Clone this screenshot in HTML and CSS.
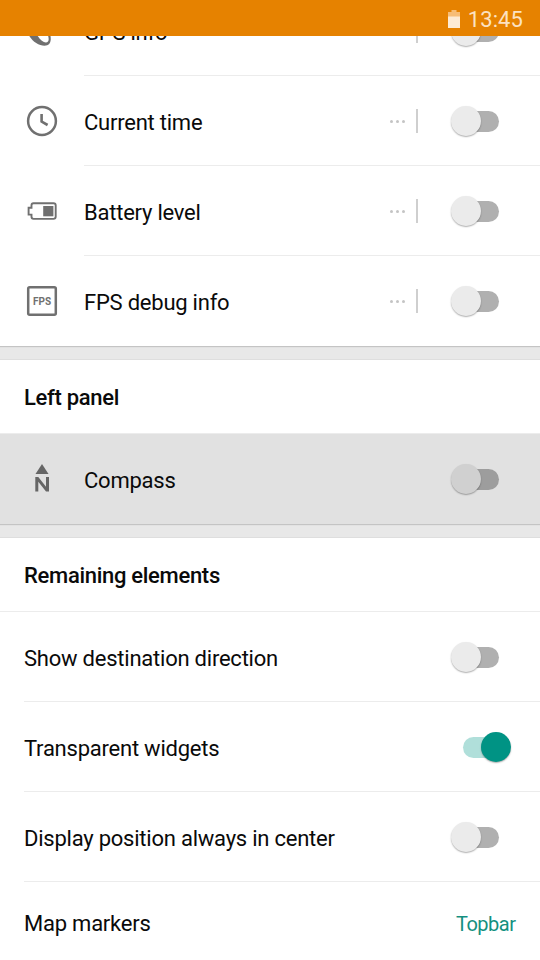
FILE: index.html
```html
<!DOCTYPE html>
<html lang="en">
<head>
<meta charset="utf-8">
<title>Configure screen</title>
<link rel="stylesheet" href="styles.css">
</head>
<body>
<div class="screen">
  <header class="status">
    <svg class="status-battery" width="12" height="18" viewBox="0 0 12 18"><path d="M3.500 0h5v2H12v5H0V2h3.500z" fill="#f7bd77"/><path d="M0 6.500h12V18H0z" fill="#fdebd5"/></svg>
    <span class="clock">13:45</span>
  </header>
  <main class="content">
    <section class="card card-first">
      <div class="row">
        <svg class="icon" width="32" height="32" viewBox="0 0 32 32"><path d="M1.500 17C4 25 12 30.800 18.500 30.800C23.500 30.800 25.800 27 24.300 20C22 12 14 6 8 5z" fill="#707070"/><path d="M8 12C10 21 16 27.500 19.800 27.500C23 27.500 23.500 24 21.500 19C19 13 13 9 8 12z" fill="#fff"/></svg>
        <span class="label">GPS info</span><span class="dots"><i></i><i></i><i></i></span><span class="bar"></span><span class="toggle"></span>
      </div>
      <div class="row">
        <svg class="icon" width="32" height="32" viewBox="0 0 32 32"><circle cx="16" cy="16" r="13.900" fill="none" stroke="#707070" stroke-width="2.500"/><path d="M15.600 9v7.600l6 3.400" fill="none" stroke="#707070" stroke-width="2.600"/></svg>
        <span class="label">Current time</span><span class="dots"><i></i><i></i><i></i></span><span class="bar"></span><span class="toggle"></span>
      </div>
      <div class="row">
        <svg class="icon" width="32" height="32" viewBox="0 0 32 32"><path d="M7.500 8.200H27.500Q29.700 8.200 29.700 10.200V21.800Q29.700 23.900 27.500 23.900H7.500Q5.500 23.900 5.500 21.800V19.600H2.600V12.800H5.500V10.200Q5.500 8.200 7.500 8.200Z" fill="none" stroke="#707070" stroke-width="1.900"/><path d="M17.200 11h10.200v10.300H17.200z" fill="#707070"/></svg>
        <span class="label">Battery level</span><span class="dots"><i></i><i></i><i></i></span><span class="bar"></span><span class="toggle"></span>
      </div>
      <div class="row">
        <svg class="icon" width="32" height="32" viewBox="0 0 32 32"><rect x="2.200" y="2.200" width="27.600" height="27.600" rx="1.500" fill="none" stroke="#707070" stroke-width="2.500"/><text class="fps" x="16" y="20" text-anchor="middle">FPS</text></svg>
        <span class="label">FPS debug info</span><span class="dots"><i></i><i></i><i></i></span><span class="bar"></span><span class="toggle"></span>
      </div>
    </section>
    <section class="card">
      <h2>Left panel</h2>
      <div class="row pressed">
        <svg class="icon" width="32" height="32" viewBox="0 0 32 32"><path d="M16 1L22.500 11H9.500z" fill="#666"/><path d="M9.300 14h3l7.700 9.800V14h3v14.500h-3l-7.700-9.800v9.800h-3z" fill="#666"/></svg>
        <span class="label">Compass</span><span class="toggle"></span>
      </div>
    </section>
    <section class="card">
      <h2>Remaining elements</h2>
      <div class="row plain"><span class="label">Show destination direction</span><span class="toggle"></span></div>
      <div class="row plain"><span class="label">Transparent widgets</span><span class="toggle on"></span></div>
      <div class="row plain"><span class="label">Display position always in center</span><span class="toggle"></span></div>
      <div class="row plain short"><span class="label">Map markers</span><span class="value">Topbar</span></div>
    </section>
  </main>
</div>
</body>
</html>
```
FILE: styles.css
```css
* { box-sizing: border-box; }
body { margin: 0; font-family: Roboto, "Liberation Sans", sans-serif; color: #0a0a0a; }
.screen { width: 540px; height: 960px; overflow: hidden; background: #e8e8e8; display: flex; flex-direction: column; }
.status { flex: none; height: 36px; background: #e68200; display: flex; justify-content: flex-end; align-items: center; padding: 2px 17px 0 0; gap: 8px; }
.clock { color: #fce2c3; font-size: 22px; line-height: 32px; padding-top: 2px; letter-spacing: 0.1px; }
.content { flex: 1; min-height: 0; overflow: hidden; display: flex; flex-direction: column; gap: 14px; }
.card { flex: none; background: #fff; box-shadow: 0 1px 1px #c4c4c4, 0 -1px 0 #dedede; }
.card-first { margin-top: -50px; }
h2 { margin: 0; height: 74px; padding: 2px 24px 0; font-size: 22px; font-weight: 500; line-height: 72px; letter-spacing: -0.3px; border-bottom: 1px solid #ececec; }
.row { height: 90px; display: flex; align-items: center; padding: 0 29px 0 26px; background: linear-gradient(#ececec, #ececec) 84px 100% / 100% 1px no-repeat; }
.row:last-child { background-image: none; }
.row.plain { padding-left: 24px; background-position: 24px 100%; }
.row.pressed { background: #e1e1e1; }
.icon { flex: none; width: 32px; height: 32px; margin-right: 26px; }
.fps { fill: #707070; font-size: 10px; font-weight: 700; }
.label { flex: 1; font-size: 22px; line-height: 30px; padding-top: 3px; letter-spacing: -0.23px; }
.dots { display: flex; gap: 3px; margin-right: 11px; }
.dots i { width: 3px; height: 3px; border-radius: 50%; background: #c4c4c4; }
.bar { width: 2px; height: 24px; background: #cfcfcf; margin-right: 33px; }
.toggle { position: relative; flex: none; width: 60px; height: 32px; }
.toggle::before { content: ""; position: absolute; left: 12px; top: 5.500px; width: 36px; height: 21px; border-radius: 11px; background: #b0b0b0; }
.toggle::after { content: ""; position: absolute; left: 0.400px; top: 0.600px; width: 30px; height: 30px; border-radius: 50%; background: #ebebeb; box-shadow: 0 1px 1.500px rgba(0,0,0,.32); }
.toggle.on::before { background: #b0dfda; }
.toggle.on::after { left: 29.500px; background: #009384; }
.pressed .toggle::before { background: #9d9d9d; }
.pressed .toggle::after { background: #d0d0d0; }
.row.short { height: 84px; padding-right: 24px; }
.short .label { padding-top: 0; }
.value { color: #149080; font-size: 20px; line-height: 30px; letter-spacing: -0.5px; margin-right: 0.5px; }
```
